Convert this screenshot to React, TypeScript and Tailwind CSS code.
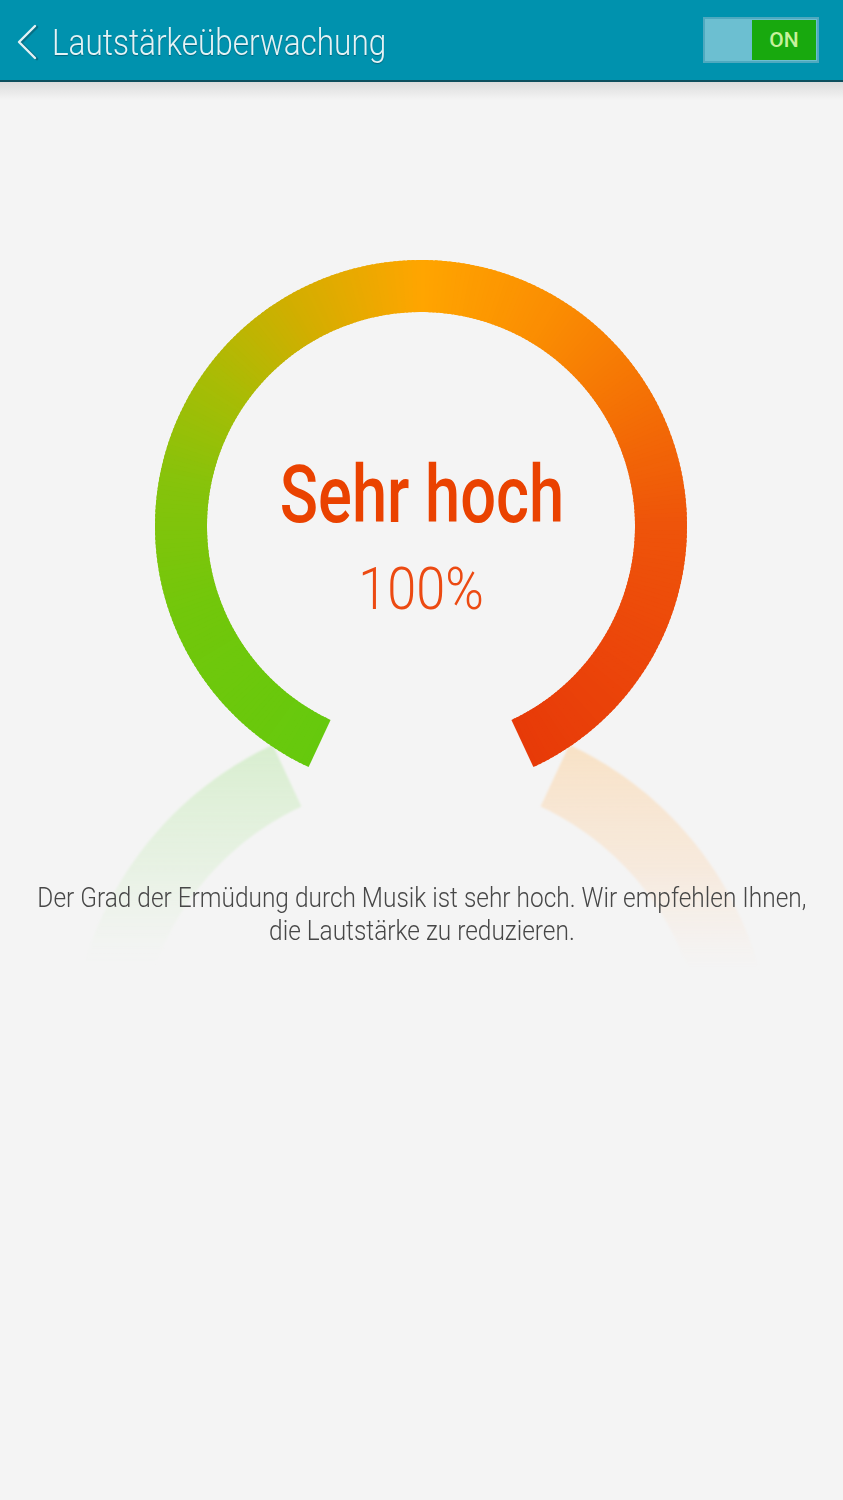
import React from "react";

const CX = 421;
const CY = 526;
const RO = 266;
const RI = 214;

const STOPS: [number, string][] = [
  [25, "#66c90d"],
  [70, "#72c70b"],
  [100, "#86c30b"],
  [125, "#a8bc05"],
  [150, "#d2ae00"],
  [180, "#ffa500"],
  [210, "#fb8e02"],
  [240, "#f47005"],
  [270, "#ee540a"],
  [300, "#ec470a"],
  [335, "#e73a08"],
];

function hexToRgb(h: string) {
  const n = parseInt(h.slice(1), 16);
  return [(n >> 16) & 255, (n >> 8) & 255, n & 255];
}

function colorAt(a: number) {
  for (let i = 0; i < STOPS.length - 1; i++) {
    const [a0, c0] = STOPS[i];
    const [a1, c1] = STOPS[i + 1];
    if (a >= a0 && a <= a1) {
      const t = (a - a0) / (a1 - a0);
      const r0 = hexToRgb(c0);
      const r1 = hexToRgb(c1);
      const c = r0.map((v, k) => Math.round(v + (r1[k] - v) * t));
      return `rgb(${c[0]},${c[1]},${c[2]})`;
    }
  }
  return STOPS[STOPS.length - 1][1];
}

const rad = (d: number) => (d * Math.PI) / 180;

function gp(r: number, a: number) {
  return `${(CX - r * Math.sin(rad(a))).toFixed(2)},${(CY + r * Math.cos(rad(a))).toFixed(2)}`;
}

const segments: { pts: string; color: string }[] = [];
for (let a = 25; a < 335; a += 1) {
  const a0 = a;
  const a1 = Math.min(a + 1.6, 335);
  segments.push({
    pts: [gp(RO, a0), gp(RO, a1), gp(RI, a1), gp(RI, a0)].join(" "),
    color: colorAt(a + 0.5),
  });
}

const RCY = 1063;
const RRO = 351;
const RRI = 283;

function reflection(side: number) {
  const outer: string[] = [];
  const inner: string[] = [];
  for (let p = 25; p <= 82; p += 1) {
    outer.push(
      `${(CX + side * RRO * Math.sin(rad(p))).toFixed(2)},${(RCY - RRO * Math.cos(rad(p))).toFixed(2)}`
    );
    inner.push(
      `${(CX + side * RRI * Math.sin(rad(p))).toFixed(2)},${(RCY - RRI * Math.cos(rad(p))).toFixed(2)}`
    );
  }
  return [...outer, ...inner.reverse()].join(" ");
}

function Gauge() {
  return (
    <svg
      className="absolute left-0 top-0"
      width={843}
      height={918}
      viewBox="0 82 843 918"
    >
      <defs>
        <linearGradient id="fadeL" gradientUnits="userSpaceOnUse" x1="0" y1="745" x2="0" y2="965">
          <stop offset="0" stopColor="#d8eecf" stopOpacity="1" />
          <stop offset="0.55" stopColor="#dff0d8" stopOpacity="0.6" />
          <stop offset="1" stopColor="#e6f2e2" stopOpacity="0" />
        </linearGradient>
        <linearGradient id="fadeR" gradientUnits="userSpaceOnUse" x1="0" y1="745" x2="0" y2="970">
          <stop offset="0" stopColor="#f8e2c6" stopOpacity="1" />
          <stop offset="0.55" stopColor="#f8e4d0" stopOpacity="0.65" />
          <stop offset="1" stopColor="#f8e8dc" stopOpacity="0" />
        </linearGradient>
        <filter id="soft" x="-10%" y="-10%" width="120%" height="120%">
          <feGaussianBlur stdDeviation="1.2" />
        </filter>
      </defs>
      <g filter="url(#soft)">
        <polygon points={reflection(-1)} fill="url(#fadeL)" />
        <polygon points={reflection(1)} fill="url(#fadeR)" />
      </g>
      {segments.map((s, i) => (
        <polygon key={i} points={s.pts} fill={s.color} />
      ))}
    </svg>
  );
}

export default function App() {
  return (
    <div
      className="w-[843px] min-h-[1500px] bg-[#f4f4f4] overflow-hidden"
      style={{ fontFamily: "Roboto, 'Noto Sans', sans-serif" }}
    >
      {/* Header */}
      <div className="relative h-[82px] bg-[#0092ae] border-b-2 border-[#0d4f5e] flex items-start">
        <svg className="ml-[14px] mt-[22px]" width="26" height="40" viewBox="0 0 26 40">
          <polyline
            points="22,4 6,20 22,36"
            fill="none"
            stroke="#0a5a6a"
            strokeWidth="2.6"
            strokeLinecap="round"
            strokeLinejoin="round"
            transform="translate(1,1)"
            opacity="0.6"
          />
          <polyline
            points="21,4 5,20 21,36"
            fill="none"
            stroke="#e4f2f5"
            strokeWidth="2.4"
            strokeLinecap="round"
            strokeLinejoin="round"
          />
        </svg>
        <div className="ml-[12px] mt-[25px] whitespace-nowrap">
          <span className="inline-block origin-left scale-x-[0.875] text-[36px] leading-[36px] font-light text-[#e3f3f6] [text-shadow:0_1px_1px_rgba(0,60,75,0.5)]">
            Lautstärkeüberwachung
          </span>
        </div>
        <div className="ml-auto mr-[24px] mt-[17px] w-[116px] h-[46px] border-[2px] border-[#4fa9bf] bg-[#6cbfd1] flex justify-end p-[1px]">
          <div className="w-[64px] h-full bg-[#18a90e] flex items-center justify-center">
            <span className="text-[21px] font-medium text-[#c6f19c] leading-none">ON</span>
          </div>
        </div>
      </div>

      {/* Shadow under header */}
      <div className="h-[18px] bg-gradient-to-b from-[#dcdcdc] to-[#f4f4f4]" />

      {/* Main gauge section */}
      <div className="relative -mt-[18px]">
        <Gauge />
        <div className="relative flex flex-col items-center pt-[373px]">
          <div className="flex justify-center w-full">
            <span className="inline-block whitespace-nowrap scale-x-[0.79] text-[80px] leading-[80px] font-medium text-[#ea4200]">
              Sehr hoch
            </span>
          </div>
          <div className="flex justify-center w-full mt-[24px]">
            <span className="inline-block whitespace-nowrap scale-x-[0.87] text-[60px] leading-[60px] font-light text-[#ec4a12]">
              100%
            </span>
          </div>
          <div className="flex justify-center w-full mt-[263px]">
            <p className="shrink-0 whitespace-nowrap text-center scale-x-[0.905] text-[27px] leading-[33px] font-light text-[#474747]">
              Der Grad der Ermüdung durch Musik ist sehr hoch. Wir empfehlen Ihnen,
              <br />
              die Lautstärke zu reduzieren.
            </p>
          </div>
        </div>
      </div>
    </div>
  );
}
